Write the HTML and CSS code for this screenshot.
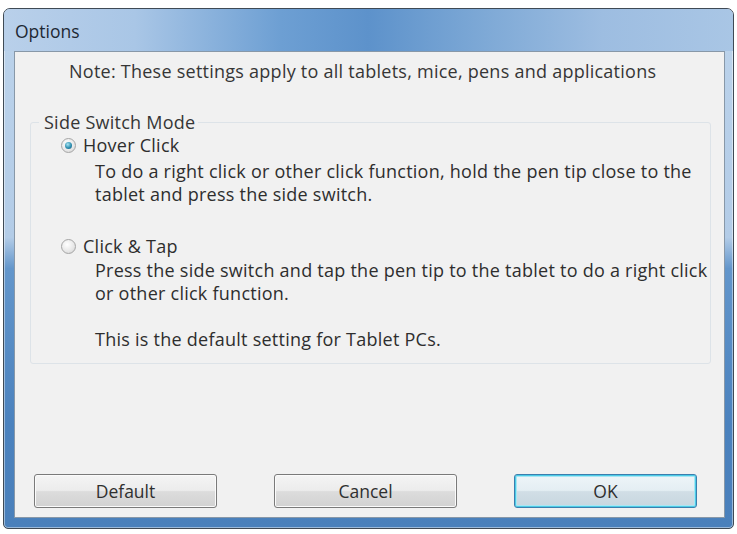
FILE: index.html
```html
<!DOCTYPE html>
<html>
<head>
<meta charset="utf-8">
<link rel="stylesheet" href="styles.css">
</head>
<body>
<div class="window">
  <div class="titlebar">Options</div>
  <div class="client">
    <p class="note">Note: These settings apply to all tablets, mice, pens and applications</p>
    <fieldset class="group">
      <legend class="legend">Side Switch Mode</legend>
      <div class="option first">
        <span class="radio checked"></span>
        <span class="label">Hover Click</span>
      </div>
      <p class="desc d1">To do a right click or other click function, hold the pen tip close to the<br>tablet and press the side switch.</p>
      <div class="option second">
        <span class="radio"></span>
        <span class="label">Click &amp; Tap</span>
      </div>
      <p class="desc d2">Press the side switch and tap the pen tip to the tablet to do a right click<br>or other click function.</p>
      <p class="desc extra">This is the default setting for Tablet PCs.</p>
    </fieldset>
    <div class="spacer"></div>
    <div class="buttons">
      <button class="btn">Default</button>
      <button class="btn">Cancel</button>
      <button class="btn primary">OK</button>
    </div>
  </div>
</div>
</body>
</html>
```

FILE: styles.css
```css
html, body {
  margin: 0;
  padding: 0;
  background: #ffffff;
}
body {
  width: 737px;
  height: 534px;
  overflow: hidden;
  font-family: "Open Sans", "Noto Sans", sans-serif;
  color: #2e2e2e;
}
.window {
  box-sizing: border-box;
  margin: 8px 0 0 3px;
  width: 731px;
  height: 521px;
  border: 1px solid #3f4a55;
  border-radius: 7px 7px 5px 5px;
  padding: 0 8px 10px 10px;
  display: flex;
  flex-direction: column;
  background: linear-gradient(to bottom, #bcd3eb 0%, #b3cce7 44%, #6396cb 50%, #4b82be 80%, #4a80bb 100%);
  box-shadow: inset 0 0 0 1px rgba(255,255,255,0.45);
}
.titlebar {
  height: 42px;
  margin: 0 -8px 0 -10px;
  padding-left: 11px;
  border-radius: 6px 6px 0 0;
  font-size: 17.5px;
  line-height: 44px;
  color: #1e2833;
  background: linear-gradient(to right, #b9d0ea 0%, #a9c6e6 18%, #6d9fd3 38%, #5d92cb 50%, #7ea9d6 66%, #9dbde1 82%, #a9c6e5 100%);
}
.client {
  flex: 1;
  display: flex;
  flex-direction: column;
  background: #f1f1f1;
  border: 1px solid #8898a8;
  font-size: 18px;
  letter-spacing: 0.25px;
}
.note {
  margin: 8px 0 0 54px;
  line-height: 22px;
  color: #363636;
  white-space: nowrap;
}
.group {
  margin: 29px 13px 0 15px;
  padding: 0 0 12px 0;
  border: 1px solid #dde3e8;
  border-radius: 3px;
}
.legend {
  margin-left: 8px;
  padding: 0 3px 0 5px;
  line-height: 22px;
  color: #363636;
}
.option {
  display: flex;
  align-items: center;
  margin: 1px 0 0 30px;
  height: 22px;
  color: #2e2e2e;
}
.option.second {
  margin-top: 29px;
}
.radio {
  box-sizing: border-box;
  width: 15px;
  height: 15px;
  border-radius: 50%;
  border: 1px solid #a5a5a5;
  background: radial-gradient(circle at 40% 35%, #ffffff 0%, #e6e6e6 60%, #cfcfcf 100%);
  margin-right: 7px;
  display: flex;
  align-items: center;
  justify-content: center;
}
.radio.checked::after {
  content: "";
  width: 7px;
  height: 7px;
  border-radius: 50%;
  background: radial-gradient(circle at 40% 35%, #a9e4f2 0%, #2e8fb0 55%, #17577a 100%);
}
.label {
  line-height: 22px;
}
.desc {
  margin: 0 0 0 64px;
  line-height: 23px;
  color: #2e2e2e;
  white-space: nowrap;
}
.desc.d1 {
  margin-top: 4px;
}
.desc.d2 {
  margin-top: 2px;
}
.desc.extra {
  margin-top: 23px;
}
.spacer {
  flex: 1;
}
.buttons {
  display: flex;
  gap: 57px;
  margin: 0 0 9px 19px;
}
.btn {
  box-sizing: border-box;
  width: 183px;
  height: 34px;
  border: 1px solid #7a7a7a;
  border-radius: 3px;
  font-family: inherit;
  font-size: 17.5px;
  color: #2f2f2f;
  background: linear-gradient(to bottom, #f4f4f4 0%, #ececec 48%, #dcdcdc 52%, #d2d2d2 100%);
  box-shadow: inset 0 0 0 1px #fbfbfb;
  padding: 0;
}
.btn.primary {
  border-color: #3b7fae;
  box-shadow: inset 0 0 0 1px #4ccbe6, inset 0 0 0 2px #a8e6f4;
  background: linear-gradient(to bottom, #eef5f8 0%, #e4eef3 48%, #d1dee6 52%, #c7d6df 100%);
}
```
